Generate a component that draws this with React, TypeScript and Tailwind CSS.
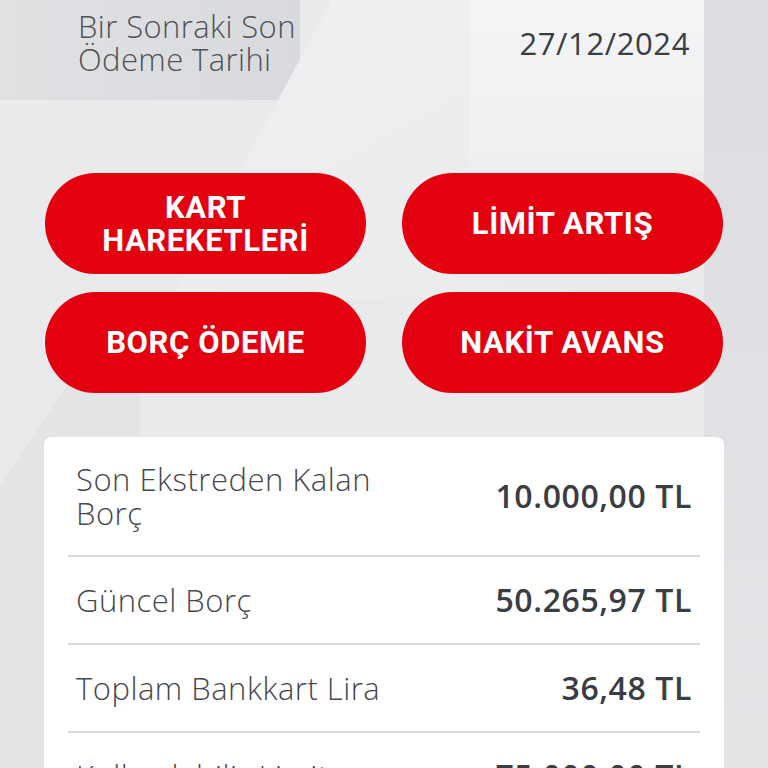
const ROWS = [
  { label: 'Son Ekstreden Kalan Borç', value: '10.000,00 TL', h: 'h-[120px]' },
  { label: 'Güncel Borç', value: '50.265,97 TL', h: 'h-[88px]' },
  { label: 'Toplam Bankkart Lira', value: '36,48 TL', h: 'h-[88px]' },
  { label: 'Kullanılabilir Limit', value: '75.000,00 TL', h: 'h-[88px]' },
]

const BUTTONS = [
  ['KART', 'HAREKETLERİ'],
  ['LİMİT ARTIŞ'],
  ['BORÇ ÖDEME'],
  ['NAKİT AVANS'],
]

export default function App() {
  return (
    <div className="relative min-h-[768px] w-full overflow-hidden bg-[#e9eaec] font-['Open_Sans',sans-serif]">
      {/* background shapes */}
      <div className="pointer-events-none absolute inset-0">
        <div className="absolute left-0 top-0 h-[100px] w-[300px] rounded-br-[14px] bg-gradient-to-r from-[#e0e1e3] to-[#d9dadd]"></div>
        <div className="absolute left-[170px] top-0 h-[300px] w-[540px] bg-gradient-to-br from-[#eff0f2] to-[#e9eaec] [clip-path:polygon(30%_0,100%_0,100%_100%,0_100%)]"></div>
        <div className="absolute left-[470px] top-0 h-[170px] w-[236px] bg-gradient-to-b from-[#f4f5f6] to-[#eeeff1]"></div>
        <div className="absolute right-0 top-0 h-[768px] w-[64px] bg-gradient-to-b from-[#dcdde0] to-[#e4e5e7]"></div>
        <div className="absolute left-0 top-[360px] h-[420px] w-[140px] bg-[#e3e4e6] [clip-path:polygon(0_30%,60%_0,100%_0,100%_100%,0_100%)]"></div>
      </div>

      <div className="relative">
        {/* header */}
        <div className="flex items-center justify-between pl-[78px] pr-[78px] pt-[10px]">
          <p className="text-[31px] font-light leading-[33px] tracking-[0.4px] text-[#4f5257]">
            Bir Sonraki Son
            <br />
            Ödeme Tarihi
          </p>
          <p className="text-[31px] font-medium tracking-[0.6px] text-[#3a3d42]">27/12/2024</p>
        </div>

        {/* actions */}
        <div className="mt-[97px] grid grid-cols-2 gap-x-[36px] gap-y-[18px] px-[45px]">
          {BUTTONS.map((lines) => (
            <button
              key={lines.join(' ')}
              className="flex h-[101px] flex-col items-center justify-center rounded-full bg-[#e3000f] font-['Roboto',sans-serif] text-[31px] font-bold leading-[33px] tracking-[0.6px] text-white"
            >
              {lines.map((l) => (
                <span key={l}>{l}</span>
              ))}
            </button>
          ))}
        </div>

        {/* summary card */}
        <div className="mx-[44px] mt-[44px] rounded-lg bg-white px-[24px]">
          {ROWS.map((row) => (
            <div key={row.label} className={`flex ${row.h} items-center justify-between border-b-2 border-[#d6d7d9] px-[8px]`}>
              <p className="w-[340px] text-[31px] font-light leading-[34px] tracking-[0.5px] text-[#45484d]">{row.label}</p>
              <p className="text-[32px] font-semibold tracking-[0.6px] text-[#3a3d42]">{row.value}</p>
            </div>
          ))}
        </div>
      </div>
    </div>
  )
}
